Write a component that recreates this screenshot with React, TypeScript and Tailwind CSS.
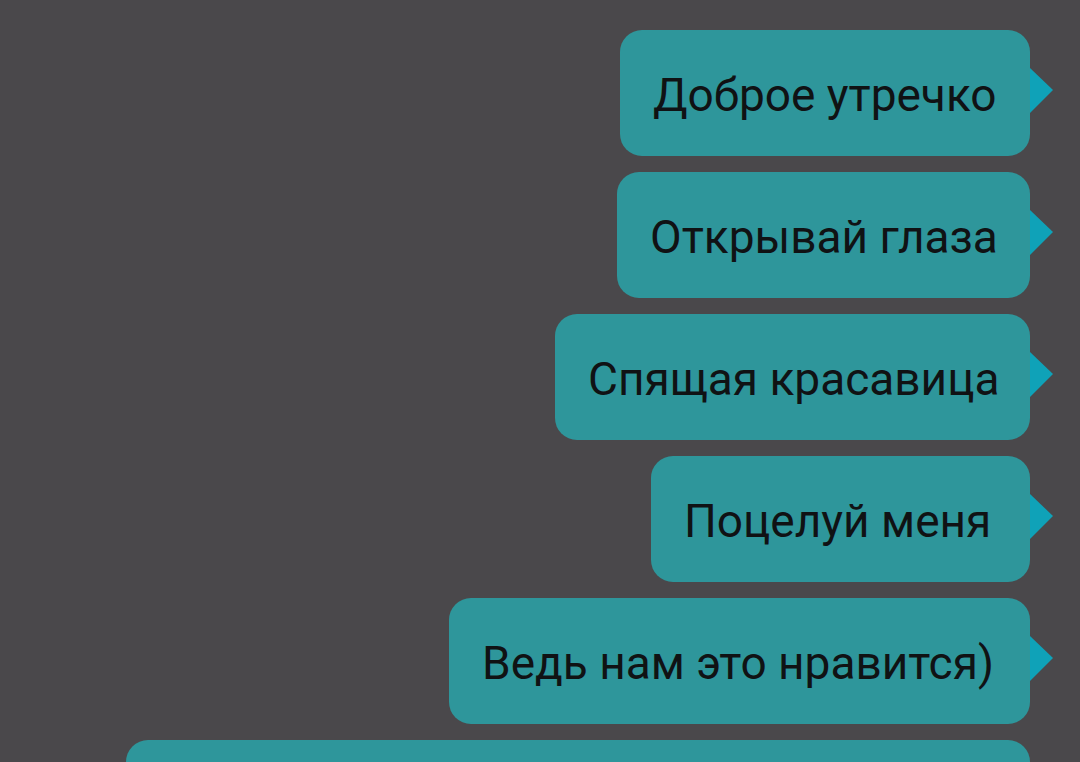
import React from "react";

type Msg = { text: string; width: number };

const messages: Msg[] = [
  { text: "Доброе утречко", width: 410 },
  { text: "Открывай глаза", width: 413 },
  { text: "Спящая красавица", width: 475 },
  { text: "Поцелуй меня ", width: 379 },
  { text: "Ведь нам это нравится)", width: 581 },
  { text: "", width: 904 },
];

function Tail() {
  return (
    <svg
      className="absolute left-full top-[38px]"
      width="24"
      height="46"
      viewBox="0 0 24 46"
    >
      <path d="M0 0 L23 22 L0 45 Z" fill="#0fa2b8" />
    </svg>
  );
}

function Bubble({ text, width }: Msg) {
  return (
    <div
      className="relative flex h-[126px] shrink-0 items-center rounded-[22px] bg-[#2e969b] pl-[33px] pt-[4px]"
      style={{ width }}
    >
      <span className="whitespace-pre text-[46px] leading-none text-[#101214]">
        {text}
      </span>
      {text && <Tail />}
    </div>
  );
}

export default function App() {
  return (
    <div
      className="flex h-[762px] w-[1080px] flex-col items-end gap-4 overflow-hidden bg-[#4a484b] pr-[50px] pt-[30px]"
      style={{ fontFamily: "Roboto, 'Noto Sans', sans-serif" }}
    >
      {messages.map((m, i) => (
        <Bubble key={i} {...m} />
      ))}
    </div>
  );
}
